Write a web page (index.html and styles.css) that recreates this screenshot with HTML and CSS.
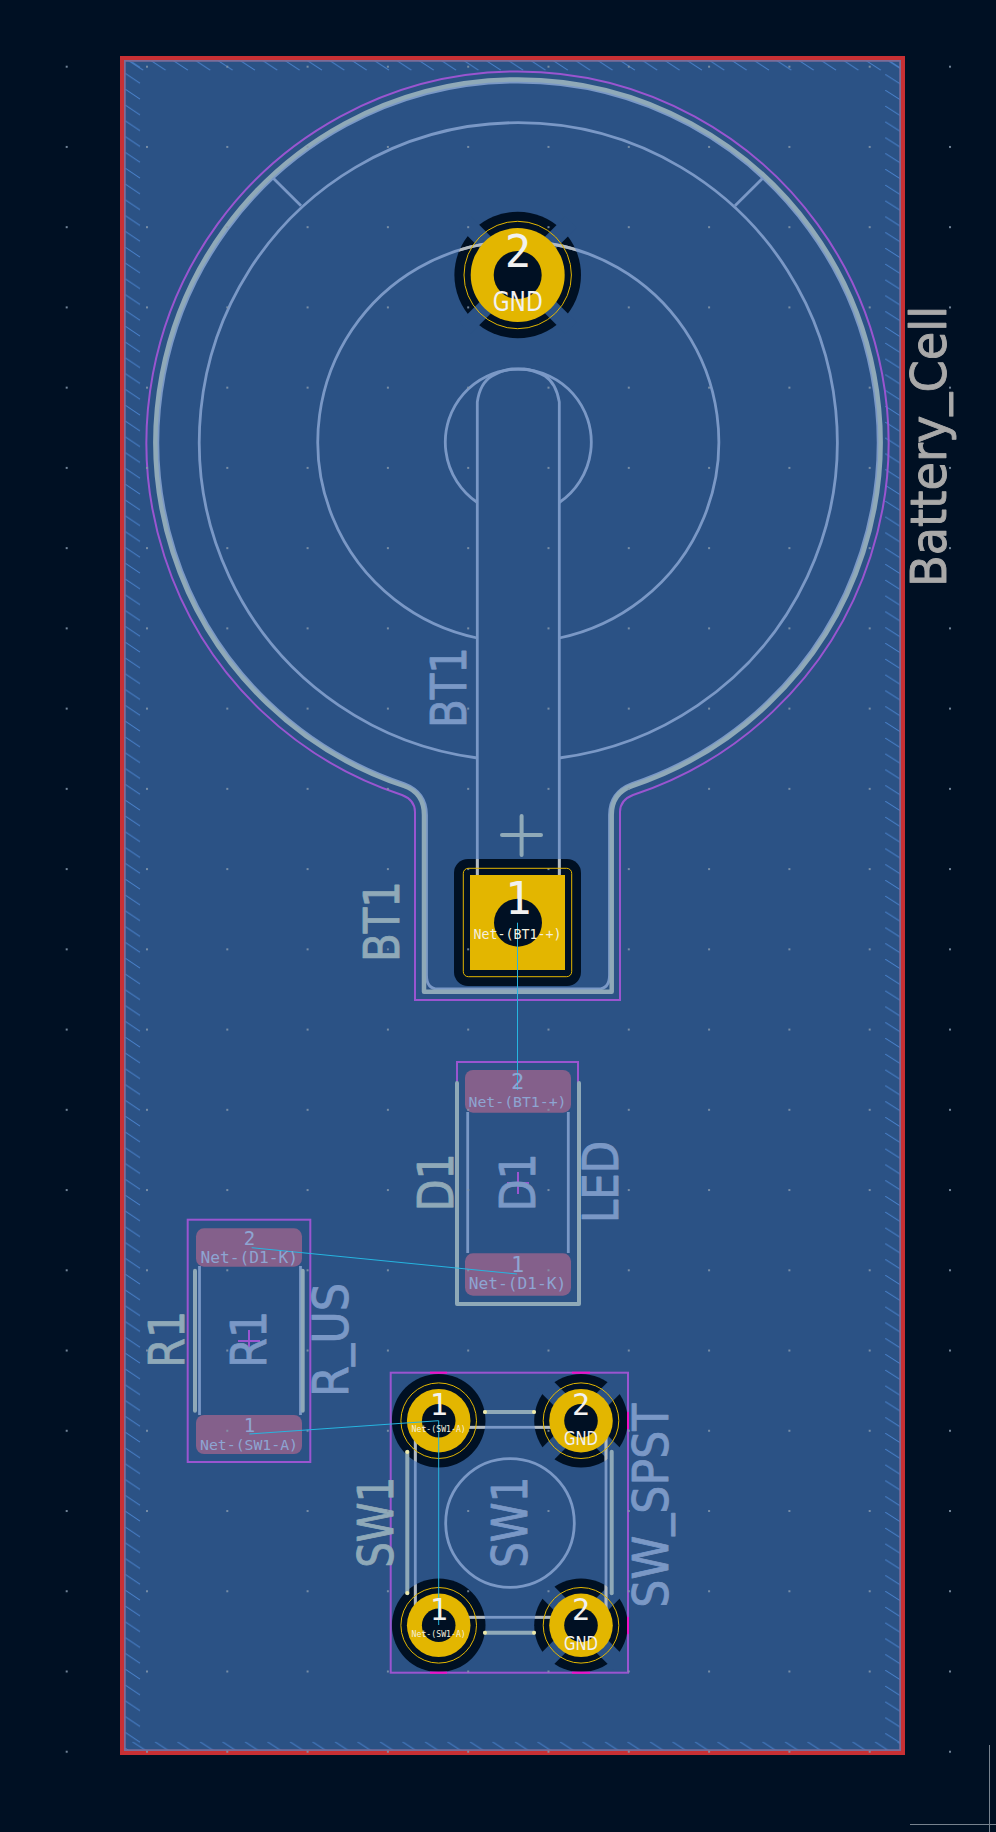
FILE: index.html
```html
<!DOCTYPE html>
<html lang="en">
<head>
<meta charset="utf-8">
<title>Battery_Cell PCB</title>
<link rel="stylesheet" href="styles.css">
</head>
<body>
<svg class="canvas" width="996" height="1832" viewBox="0 0 996 1832" xmlns="http://www.w3.org/2000/svg">
  <defs>
    <pattern id="hatch-side-l" patternUnits="userSpaceOnUse" x="125" y="73.3" width="16" height="15.8">
      <line class="hatch" x1="0" y1="0" x2="15" y2="10"/>
    </pattern>
    <pattern id="hatch-side-r" patternUnits="userSpaceOnUse" x="885" y="74.3" width="16" height="15.8">
      <line class="hatch" x1="0" y1="0" x2="15" y2="9.5"/>
    </pattern>
    <pattern id="hatch-top" patternUnits="userSpaceOnUse" x="127.65" y="60" width="22.35" height="12">
      <line class="hatch" x1="0" y1="0" x2="15.5" y2="10.2"/>
    </pattern>
    <pattern id="hatch-bottom" patternUnits="userSpaceOnUse" x="852.3" y="1741.7" width="22.5" height="12">
      <line class="hatch" x1="0" y1="0" x2="14.5" y2="9.4"/>
    </pattern>
    <pattern id="grid" patternUnits="userSpaceOnUse" x="65.7" y="65.7" width="80.3" height="80.24">
      <rect class="grid-dot" x="0" y="0" width="2" height="2"/>
    </pattern>
    <clipPath id="anti-pads">
      <circle cx="517.7" cy="275" r="63.3"/>
      <rect x="454" y="859" width="127" height="127" rx="14"/>
      <circle cx="438.7" cy="1420.7" r="46.8"/>
      <circle cx="438.7" cy="1625.3" r="46.8"/>
      <circle cx="581" cy="1420.7" r="46.8"/>
      <circle cx="581" cy="1625.3" r="46.8"/>
    </clipPath>
    <g id="fab-lines">
      <path d="M426.5 975 V815 Q426.5 792 404 783.5 A360 360 0 1 1 632 783.5 Q609.5 792 609.5 815 V975 Q609.5 989 598 989 H438 Q426.5 989 426.5 975"/>
      <path d="M477.3 638 A200.5 200.5 0 1 1 559.3 638"/>
      <path d="M477.3 758 A319 319 0 1 1 559.3 758"/>
      <path d="M477.3 502.5 A73 73 0 1 1 559.3 502.5"/>
      <path d="M477.3 875 V402 Q480 383 492 376 Q502 370 512 369 H524 Q534 370 545 376 Q556 383 559.3 402 V875"/>
      <line x1="273.3" y1="178.3" x2="301" y2="205.7"/>
      <line x1="762.7" y1="178.3" x2="735" y2="205.7"/>
      <line x1="467.7" y1="1112" x2="467.7" y2="1253"/>
      <line x1="568.3" y1="1112" x2="568.3" y2="1253"/>
      <line x1="199.5" y1="1266" x2="199.5" y2="1415"/>
      <line x1="300.5" y1="1266" x2="300.5" y2="1415"/>
      <rect x="415.3" y="1427.3" width="190.7" height="190"/>
      <circle cx="510" cy="1523" r="64.3"/>
    </g>
  </defs>

  <!-- board -->
  <rect class="board" x="122" y="58" width="781" height="1695"/>
  <rect fill="url(#hatch-side-l)" x="125" y="62" width="16" height="1688"/>
  <rect fill="url(#hatch-side-r)" x="885" y="62" width="16" height="1688"/>
  <rect fill="url(#hatch-top)" x="125" y="60" width="776" height="12"/>
  <rect fill="url(#hatch-bottom)" x="125" y="1741.7" width="776" height="10"/>
  <rect class="zone-edge" x="124.5" y="60.5" width="776" height="1690"/>
  <rect class="edge-cuts" x="122" y="58" width="781" height="1695"/>

  <!-- anti-pads with thermal spokes -->
  <circle class="anti" cx="517.7" cy="275" r="63.3"/>
  <line class="spoke spoke-big" x1="465" y1="222" x2="571" y2="328"/>
  <line class="spoke spoke-big" x1="571" y1="222" x2="465" y2="328"/>
  <rect class="anti" x="454" y="859" width="127" height="127" rx="14"/>
  <circle class="anti" cx="438.7" cy="1420.7" r="46.8"/>
  <circle class="anti" cx="438.7" cy="1625.3" r="46.8"/>
  <circle class="anti" cx="581" cy="1420.7" r="46.8"/>
  <line class="spoke" x1="543" y1="1382.7" x2="619" y2="1458.7"/>
  <line class="spoke" x1="619" y1="1382.7" x2="543" y2="1458.7"/>
  <circle class="anti" cx="581" cy="1625.3" r="46.8"/>
  <line class="spoke" x1="543" y1="1587.3" x2="619" y2="1663.3"/>
  <line class="spoke" x1="619" y1="1587.3" x2="543" y2="1663.3"/>

  <!-- back-side SMD pads -->
  <rect class="smd" x="465" y="1070" width="106" height="42.7" rx="8"/>
  <rect class="smd" x="465" y="1253.3" width="106" height="42.4" rx="8"/>
  <rect class="smd" x="196" y="1228.3" width="106" height="38.4" rx="8"/>
  <rect class="smd" x="196" y="1415" width="106" height="39" rx="8"/>

  <!-- fabrication layer -->
  <use class="fab" href="#fab-lines"/>
  <use class="fab-over" href="#fab-lines" clip-path="url(#anti-pads)"/>

  <!-- courtyard -->
  <path class="court" d="M415 1000 V812 Q415 800 402 795 A371 371 0 1 1 633 795 Q620 800 620 812 V1000 Z"/>
  <path class="court" d="M457 1100 V1062 H578 V1100"/>
  <rect class="court" x="187.7" y="1219.7" width="122.6" height="242.3"/>
  <rect class="court" x="390.7" y="1372.7" width="237.3" height="300"/>
  <line class="court" x1="507" y1="1183" x2="529" y2="1183"/>
  <line class="court" x1="518" y1="1172" x2="518" y2="1194"/>
  <line class="court" x1="238" y1="1341" x2="260" y2="1341"/>
  <line class="court" x1="249" y1="1330" x2="249" y2="1352"/>
  <line class="court-hot" x1="430" y1="1372.7" x2="447" y2="1372.7"/>
  <line class="court-hot" x1="430" y1="1672.7" x2="447" y2="1672.7"/>
  <line class="court-hot" x1="572" y1="1372.7" x2="590" y2="1372.7"/>
  <line class="court-hot" x1="572" y1="1672.7" x2="590" y2="1672.7"/>
  <line class="court-hot" x1="628" y1="1617" x2="628" y2="1634"/>
  <line class="court-hot" x1="628" y1="1412" x2="628" y2="1429"/>

  <!-- silkscreen -->
  <path class="silk-ring" d="M424 991.7 V815 Q424 793 404 786 A362.5 362.5 0 1 1 632 786 Q611.7 793 611.7 815 V991.7 Z"/>
  <line class="silk" x1="502" y1="835" x2="541" y2="835"/>
  <line class="silk" x1="521.6" y1="816" x2="521.6" y2="855"/>
  <path class="silk" d="M457 1083 V1304 H579 V1083"/>
  <line class="silk" x1="195" y1="1270.7" x2="195" y2="1410.7"/>
  <line class="silk" x1="302.7" y1="1270.7" x2="302.7" y2="1410.7"/>
  <line class="silk" x1="407.3" y1="1451.7" x2="407.3" y2="1593.3"/>
  <line class="silk" x1="611.7" y1="1451.7" x2="611.7" y2="1593.3"/>
  <line class="silk" x1="485" y1="1412" x2="534" y2="1412"/>
  <line class="silk" x1="485" y1="1632.7" x2="534" y2="1632.7"/>
  <circle class="silk-tip" cx="407.3" cy="1452" r="2"/>
  <circle class="silk-tip" cx="407.3" cy="1593" r="2"/>
  <circle class="silk-tip" cx="485" cy="1412" r="2"/>
  <circle class="silk-tip" cx="534" cy="1412" r="2"/>
  <circle class="silk-tip" cx="485" cy="1632.7" r="2"/>
  <circle class="silk-tip" cx="534" cy="1632.7" r="2"/>

  <!-- reference / value text -->
  <text class="label label-title" transform="translate(946 587) rotate(-90)" textLength="281" lengthAdjust="spacingAndGlyphs">Battery<tspan dy="-5">_</tspan><tspan dy="5">Cell</tspan></text>
  <text class="label label-silk" transform="translate(399.3 962) rotate(-90)" textLength="81" lengthAdjust="spacingAndGlyphs">BT1</text>
  <text class="label label-fab" transform="translate(466 728) rotate(-90)" textLength="81" lengthAdjust="spacingAndGlyphs">BT1</text>
  <text class="label label-silk" transform="translate(452.7 1211.3) rotate(-90)" textLength="58" lengthAdjust="spacingAndGlyphs">D1</text>
  <text class="label label-fab" transform="translate(535 1211.3) rotate(-90)" textLength="58" lengthAdjust="spacingAndGlyphs">D1</text>
  <text class="label label-fab" transform="translate(618 1223) rotate(-90)" textLength="82" lengthAdjust="spacingAndGlyphs">LED</text>
  <text class="label label-silk" transform="translate(184 1367.7) rotate(-90)" textLength="57" lengthAdjust="spacingAndGlyphs">R1</text>
  <text class="label label-fab" transform="translate(266 1367.7) rotate(-90)" textLength="57" lengthAdjust="spacingAndGlyphs">R1</text>
  <text class="label label-fab" transform="translate(348.3 1397) rotate(-90)" textLength="114" lengthAdjust="spacingAndGlyphs">R<tspan dy="-5">_</tspan><tspan dy="5">US</tspan></text>
  <text class="label label-silk" transform="translate(393 1567.7) rotate(-90)" textLength="91" lengthAdjust="spacingAndGlyphs">SW1</text>
  <text class="label label-fab" transform="translate(527.3 1567.7) rotate(-90)" textLength="91" lengthAdjust="spacingAndGlyphs">SW1</text>
  <text class="label label-fab" transform="translate(668 1607.7) rotate(-90)" textLength="204" lengthAdjust="spacingAndGlyphs">SW<tspan dy="-5">_</tspan><tspan dy="5">SPST</tspan></text>

  <!-- grid -->
  <rect fill="url(#grid)" x="0" y="0" width="996" height="1800"/>

  <!-- through-hole pads -->
  <circle class="copper" cx="517.7" cy="275" r="47"/>
  <circle class="pad-ring" cx="517.7" cy="275" r="53.7"/>
  <circle class="anti" cx="517.7" cy="275" r="24"/>
  <rect class="copper" x="470" y="875" width="95" height="95"/>
  <rect class="pad-ring" x="463.3" y="868.3" width="108.4" height="108.4" rx="5"/>
  <circle class="anti" cx="518" cy="922.7" r="24"/>
  <circle class="copper" cx="438.7" cy="1420.7" r="31.8"/>
  <circle class="pad-ring" cx="438.7" cy="1420.7" r="37.8"/>
  <circle class="anti" cx="438.7" cy="1420.7" r="16.8"/>
  <circle class="copper" cx="438.7" cy="1625.3" r="31.8"/>
  <circle class="pad-ring" cx="438.7" cy="1625.3" r="37.8"/>
  <circle class="anti" cx="438.7" cy="1625.3" r="16.8"/>
  <circle class="copper" cx="581" cy="1420.7" r="31.8"/>
  <circle class="pad-ring" cx="581" cy="1420.7" r="37.8"/>
  <circle class="anti" cx="581" cy="1420.7" r="16.8"/>
  <circle class="copper" cx="581" cy="1625.3" r="31.8"/>
  <circle class="pad-ring" cx="581" cy="1625.3" r="37.8"/>
  <circle class="anti" cx="581" cy="1625.3" r="16.8"/>

  <!-- ratsnest -->
  <line class="rats" x1="517.5" y1="922.7" x2="517.5" y2="1090"/>
  <line class="rats" x1="517" y1="1274" x2="251.7" y2="1247.7"/>
  <line class="rats" x1="249.3" y1="1434" x2="438.7" y2="1420.7"/>
  <line class="rats" x1="438.7" y1="1420.7" x2="438.7" y2="1625"/>

  <!-- pad text: through-hole -->
  <text class="pad-num pad-num-xl" x="518" y="267.3">2</text>
  <text class="pad-net-cond pad-net-xl" x="517.7" y="311" textLength="50" lengthAdjust="spacingAndGlyphs">GND</text>
  <text class="pad-num pad-num-xl" x="518.3" y="914.3">1</text>
  <text class="pad-mono pad-mono-md" x="517.5" y="938.5">Net-(BT1-+)</text>
  <text class="pad-num pad-num-lg" x="438.7" y="1415">1</text>
  <text class="pad-mono pad-mono-xs" x="438.7" y="1431.5">Net-(SW1-A)</text>
  <text class="pad-num pad-num-lg" x="581" y="1415">2</text>
  <text class="pad-net-cond pad-net-lg" x="581" y="1445" textLength="34" lengthAdjust="spacingAndGlyphs">GND</text>
  <text class="pad-num pad-num-lg" x="438.7" y="1620">1</text>
  <text class="pad-mono pad-mono-xs" x="438.7" y="1637">Net-(SW1-A)</text>
  <text class="pad-num pad-num-lg" x="581" y="1620">2</text>
  <text class="pad-net-cond pad-net-lg" x="581" y="1650" textLength="34" lengthAdjust="spacingAndGlyphs">GND</text>

  <!-- pad text: SMD -->
  <text class="smd-num smd-num-lg" x="517.5" y="1089.3">2</text>
  <text class="smd-net smd-net-sm" x="517.5" y="1107">Net-(BT1-+)</text>
  <text class="smd-num smd-num-lg" x="517.5" y="1271.7">1</text>
  <text class="smd-net smd-net-lg" x="517.5" y="1289">Net-(D1-K)</text>
  <text class="smd-num smd-num-sm" x="249.5" y="1245">2</text>
  <text class="smd-net smd-net-lg" x="249.2" y="1263">Net-(D1-K)</text>
  <text class="smd-num smd-num-sm" x="249.5" y="1431.7">1</text>
  <text class="smd-net smd-net-sm" x="249" y="1450">Net-(SW1-A)</text>

  <!-- page frame corner -->
  <line class="frame" x1="989.5" y1="1745" x2="989.5" y2="1832"/>
  <line class="frame" x1="910" y1="1824.5" x2="996" y2="1824.5"/>
</svg>
</body>
</html>
```

FILE: styles.css
```css
html, body {
  margin: 0;
  padding: 0;
  background: #001023;
}

.canvas {
  display: block;
}

.board { fill: #2b5285; }
.hatch { stroke: #4a82cc; stroke-width: 1; fill: none; }
.zone-edge { fill: none; stroke: #7c6c98; stroke-width: 2.5; }
.edge-cuts { fill: none; stroke: #c83034; stroke-width: 4; }
.grid-dot { fill: #8496aa; opacity: 0.85; }

.anti { fill: #001023; }
.spoke { stroke: #2b5285; stroke-width: 17; fill: none; }
.spoke-big { stroke-width: 16; }
.smd { fill: #84608b; }

.fab { fill: none; stroke: #7a98c6; stroke-width: 2.8; }
.fab-over { fill: none; stroke: #b4babf; stroke-width: 2.8; }

.court { fill: none; stroke: #9a55d0; stroke-width: 2; }
.court-hot { stroke: #f010c8; stroke-width: 2; }

.silk { fill: none; stroke: #8fa9b8; stroke-width: 4; stroke-linecap: round; stroke-linejoin: round; }
.silk-ring { fill: none; stroke: #8fa9b8; stroke-width: 4.5; stroke-linejoin: round; }
.silk-tip { fill: #ece8a8; }

.label {
  font-family: "DejaVu Sans", sans-serif;
  font-size: 50px;
  stroke-width: 0.9;
  stroke-linejoin: round;
}
.label-title { fill: #a9a9a9; stroke: #a9a9a9; }
.label-silk { fill: #8fa9b8; stroke: #8fa9b8; }
.label-fab { fill: #7a98c6; stroke: #7a98c6; }

.copper { fill: #e3b600; }
.pad-ring { fill: none; stroke: #e3b600; stroke-width: 1; }

.rats { stroke: #26b5e0; stroke-width: 1; }

.pad-num {
  font-family: "DejaVu Sans Mono", monospace;
  fill: #f1f1f1;
  text-anchor: middle;
}
.pad-net-cond {
  font-family: "DejaVu Sans", sans-serif;
  fill: #f1f1f1;
  text-anchor: middle;
}
.pad-num-xl { font-size: 44px; }
.pad-num-lg { font-size: 30px; }
.pad-net-xl { font-size: 27px; }
.pad-net-lg { font-size: 19px; }

.pad-mono {
  font-family: "DejaVu Sans Mono", monospace;
  fill: #f3efdf;
  text-anchor: middle;
}
.pad-mono-md { font-size: 13.3px; }
.pad-mono-xs { font-size: 8.2px; }

.smd-num, .smd-net {
  font-family: "DejaVu Sans Mono", monospace;
  fill: #8ea5d2;
  text-anchor: middle;
}
.smd-num-lg { font-size: 22px; }
.smd-num-sm { font-size: 19px; }
.smd-net-lg { font-size: 16.2px; }
.smd-net-sm { font-size: 14.8px; }

.frame { stroke: #77828e; stroke-width: 1; }
```
